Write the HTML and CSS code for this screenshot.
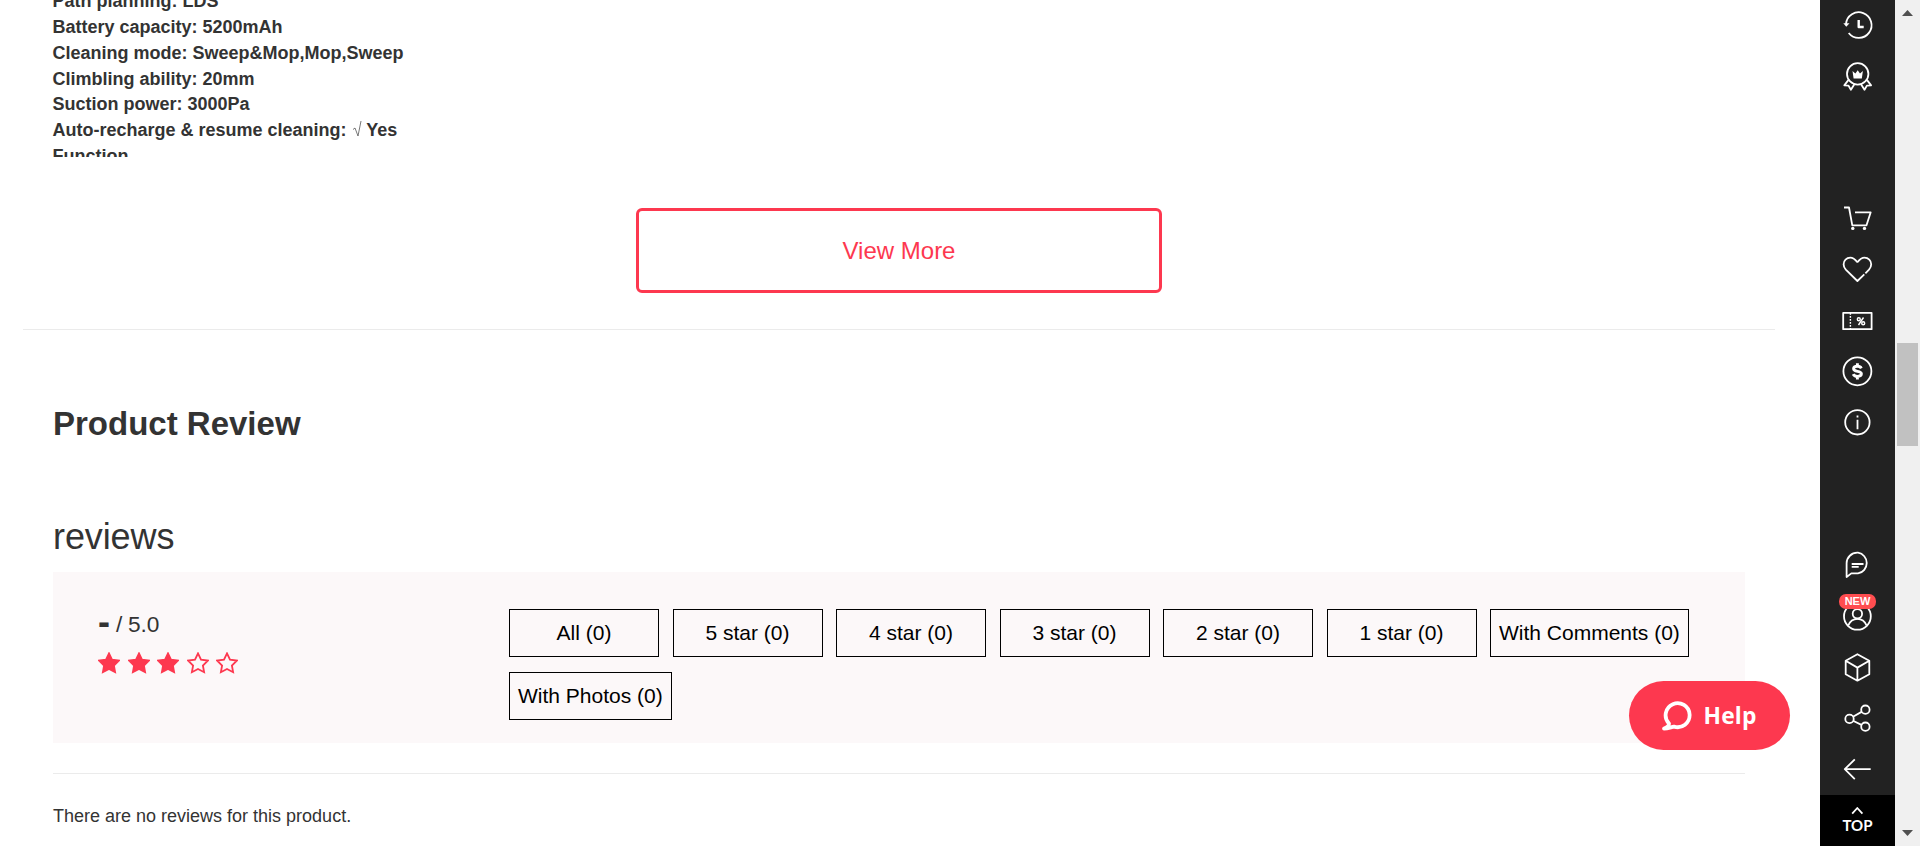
FILE: index.html
```html
<!DOCTYPE html>
<html lang="en">
<head>
<meta charset="utf-8">
<title>Product Review</title>
<link rel="stylesheet" href="styles.css">
</head>
<body>
<div class="page">
  <main class="main">
    <section class="details">
      <div class="specs">
        <p>Path planning: LDS</p>
        <p>Battery capacity: 5200mAh</p>
        <p>Cleaning mode: Sweep&amp;Mop,Mop,Sweep</p>
        <p>Climbling ability: 20mm</p>
        <p>Suction power: 3000Pa</p>
        <p>Auto-recharge &amp; resume cleaning: <svg class="root" viewBox="0 0 10 18"><path d="M1 9.500l2-1.500 3 8L9 1"/></svg> Yes</p>
        <p>Function</p>
      </div>
      <button class="view-more">View More</button>
    </section>
    <section class="review">
      <h2 class="title">Product Review</h2>
      <h3 class="subtitle">reviews</h3>
      <div class="panel">
        <div class="score">
          <div class="score-value"><b class="score-dash">-</b> / 5.0</div>
          <div class="stars">
            <svg class="star full" viewBox="0 0 22 22"><path d="M11 1.400l3 6.200 6.800 1-4.900 4.900 1.200 6.700-6.100-3.200-6.100 3.200 1.200-6.700-4.900-4.900 6.800-1z"/></svg>
            <svg class="star full" viewBox="0 0 22 22"><path d="M11 1.400l3 6.200 6.800 1-4.900 4.900 1.200 6.700-6.100-3.200-6.100 3.200 1.200-6.700-4.900-4.900 6.800-1z"/></svg>
            <svg class="star full" viewBox="0 0 22 22"><path d="M11 1.400l3 6.200 6.800 1-4.900 4.900 1.200 6.700-6.100-3.200-6.100 3.200 1.200-6.700-4.900-4.900 6.800-1z"/></svg>
            <svg class="star" viewBox="0 0 22 22"><path d="M11 1.400l3 6.200 6.800 1-4.900 4.900 1.200 6.700-6.100-3.200-6.100 3.200 1.200-6.700-4.900-4.900 6.800-1z"/></svg>
            <svg class="star" viewBox="0 0 22 22"><path d="M11 1.400l3 6.200 6.800 1-4.900 4.900 1.200 6.700-6.100-3.200-6.100 3.200 1.200-6.700-4.900-4.900 6.800-1z"/></svg>
          </div>
        </div>
        <div class="filters">
          <button class="filter">All (0)</button>
          <button class="filter">5 star (0)</button>
          <button class="filter">4 star (0)</button>
          <button class="filter">3 star (0)</button>
          <button class="filter">2 star (0)</button>
          <button class="filter">1 star (0)</button>
          <button class="filter">With Comments (0)</button>
          <button class="filter">With Photos (0)</button>
        </div>
      </div>
      <p class="empty">There are no reviews for this product.</p>
    </section>
  </main>

  <nav class="toolbar">
    <div class="group">
      <a class="tool"><svg class="icon" viewBox="0 0 75 51"><path d="M26 24A12.800 12.800 0 1 1 28.700 33"/><path class="solid" d="M23.300 23.300h6.200L26.300 26.800z"/><path class="thick" d="M38.700 20v7h5"/></svg></a>
      <a class="tool"><svg class="icon" viewBox="0 0 75 51"><circle cx="37.700" cy="22.900" r="10.700"/><path d="M28.300 29.100l-4 5.300 4.200.2 2.400 4.200 3.800-6M47.100 29.100l4 5.300-4.200.2-2.400 4.200-3.800-6"/><path class="solid" d="M32.500 20.100l2.900 2.500 2.300-3.300 2.300 3.300 2.900-2.500-1.100 7.500h-8.200z"/></svg></a>
    </div>
    <div class="group middle">
      <a class="tool"><svg class="icon" viewBox="0 0 75 51"><path d="M24 14.500h5l3.300 17.800h14.200l4.200-13H35"/><circle class="solid" cx="32.800" cy="35.400" r="1.700"/><circle class="solid" cx="44.500" cy="35.400" r="1.700"/></svg></a>
      <a class="tool"><svg class="icon" viewBox="0 0 75 51"><path d="M37.400 18.300C34.500 14.600 32.500 13.700 30.300 13.700 26.500 13.700 23.600 16.500 23.600 20.300c0 2 .6 3.700 2.200 5.400L37.400 37l6.900-6.700M45.400 29.300l3.600-3.600c1.600-1.700 2.200-3.400 2.200-5.400 0-3.800-2.900-6.600-6.700-6.600-2.200 0-4.200.9-7.100 4.600"/></svg></a>
      <a class="tool"><svg class="icon" viewBox="0 0 75 51"><path d="M23.200 17.800h28.400v16.400H23.200z"/><path class="dash" d="M30.400 18v16"/><g class="thin"><circle cx="38.800" cy="24.200" r="1.500"/><circle cx="43.200" cy="28.200" r="1.500"/><path d="M43.500 22.500l-5 7.500"/></g></svg></a>
      <a class="tool"><svg class="icon" viewBox="0 0 75 51"><circle cx="37.400" cy="25.300" r="14"/><path class="bold" d="M41.300 22.300c-.7-1.600-1.900-2-3.900-2-2.400 0-3.800 1-3.800 2.500 0 3.800 7.800 1.300 7.800 5 0 1.700-1.500 2.600-4 2.600-2.100 0-3.500-.6-4.200-2.200M37.400 17.200v3M37.400 30v3.400"/></svg></a>
      <a class="tool"><svg class="icon" viewBox="0 0 75 51"><circle cx="37.400" cy="25.300" r="12.200"/><path d="M37.500 22.700v9.600M37.500 18.500v2"/></svg></a>
    </div>
    <div class="group">
      <a class="tool"><svg class="icon" viewBox="0 0 75 51"><path d="M26.600 37V23.200A10.700 10.700 0 0 1 37.300 12.700h.7a10.500 10.500 0 0 1 0 20.700h-6.700z"/><path d="M31.700 24h11.800M31.700 26.900h7"/></svg></a>
      <a class="tool"><svg class="icon" viewBox="0 0 75 51"><circle cx="37.400" cy="25.300" r="13.400"/><circle cx="37.400" cy="22.800" r="4.700"/><path d="M28.200 34.500C30 30.200 33 27.900 37.400 27.900s7.400 2.300 9.200 6.600"/></svg><span class="badge">NEW</span></a>
      <a class="tool"><svg class="icon" viewBox="0 0 75 51"><path d="M37.400 12.200l11.900 6.500v13.500l-11.900 6.500-11.700-6.500V18.700zM25.700 18.700l11.700 6.900 11.900-6.900M37.400 25.600v13"/></svg></a>
      <a class="tool"><svg class="icon" viewBox="0 0 75 51"><circle cx="29.500" cy="25.900" r="4.200"/><circle cx="45.400" cy="16.700" r="4.200"/><circle cx="45.400" cy="33.700" r="4.200"/><path d="M33 23.800l9-5.200M33 27.800l9 4.300"/></svg></a>
      <a class="tool"><svg class="icon" viewBox="0 0 75 51"><path d="M50.700 25.200H24.600M34.800 15.400l-10 9.800 10 10"/></svg></a>
      <a class="tool top"><svg class="icon" viewBox="0 0 75 51"><path d="M32.200 18.700l5.100-5.700 5.100 5.700"/></svg><span class="top-label">TOP</span></a>
    </div>
  </nav>

  <div class="scrollbar">
    <svg class="arrow" viewBox="0 0 25 17"><path d="M7 16L12.500 10l5.500 6z"/></svg>
    <div class="thumb"></div>
    <svg class="arrow" viewBox="0 0 25 17"><path d="M7 1l5.500 6L18 1z"/></svg>
  </div>

  <button class="help"><svg class="help-icon" viewBox="0 0 30 32"><path d="M7 23.500A12 12 0 1 1 12 26.600C8 27.500 5.500 28.500 2 28.500 5 27.500 7 26 7 23.500z"/></svg>Help</button>
</div>
</body>
</html>
```

FILE: styles.css
```css
* { box-sizing: border-box; }
body {
  margin: 0;
  background: #fff;
  color: #333;
  font: 18px/1.42857 "Liberation Sans", Arial, sans-serif;
}
p, h2, h3 { margin: 0; }
button { font-family: inherit; }

.page { display: flex; height: 846px; overflow: hidden; position: relative; }
.main { width: 1752px; margin: 0 45px 0 23px; }

.details {
  display: flex;
  flex-direction: column;
  align-items: center;
  height: 330px;
  border-bottom: 1px solid #ebebeb;
}
.specs {
  display: flex;
  flex-direction: column;
  justify-content: flex-end;
  width: 100%;
  height: 157px;
  padding-left: 29.500px;
  overflow: hidden;
  font-weight: 700;
}
.specs p { flex: none; }
.specs p:last-child { height: 13.400px; }
.root {
  width: 10px;
  height: 18px;
  fill: none;
  stroke: #555;
  stroke-width: .8;
  vertical-align: -2px;
}
.view-more {
  width: 526px;
  height: 85px;
  margin-top: 51px;
  background: #fff;
  border: 3px solid #fd384f;
  border-radius: 6px;
  color: #fd384f;
  font-size: 24px;
}

.review { padding: 0 30px; }
.title { padding-top: 70px; font-size: 33px; line-height: 48px; }
.subtitle { padding-top: 63px; font-size: 36px; line-height: 52px; font-weight: 400; letter-spacing: -.1px; }
.panel {
  display: flex;
  height: 171px;
  margin-top: 9px;
  padding: 37px 45px 0;
  background: #fcf8f9;
}
.score { width: 411px; }
.score-value { height: 38px; margin-top: -5px; font-size: 22.700px; line-height: 31px; letter-spacing: -.2px; }
.score-dash { position: relative; top: 2px; font-size: 36px; line-height: 31px; }
.stars { display: flex; gap: 7.500px; margin-top: 9.500px; }
.star {
  width: 22px;
  height: 22px;
  fill: none;
  stroke: #fd384f;
  stroke-width: 1.800;
}
.full { fill: #fd384f; }
.filters { display: flex; flex-wrap: wrap; align-content: flex-start; gap: 15px 13.500px; flex: 1; }
.filter {
  min-width: 150px;
  height: 48px;
  padding: 0 8px;
  background: transparent;
  border: 1px solid #000;
  color: #000;
  font-size: 21px;
}
.empty { margin-top: 30px; padding-top: 30px; border-top: 1px solid #ebebeb; }

.toolbar {
  display: flex;
  flex-direction: column;
  justify-content: space-between;
  width: 75px;
  background: #222;
}
.middle { margin-bottom: 1px; }
.tool { display: block; position: relative; height: 51px; }
.icon {
  display: block;
  width: 75px;
  height: 51px;
  fill: none;
  stroke: #fff;
  stroke-width: 1.800;
  stroke-linejoin: round;
}
.solid { fill: #fff; stroke: none; }
.thick { stroke-width: 2.400; }
.bold { stroke-width: 2.900; }
.thin { stroke-width: 1.400; }
.dash { stroke-width: 1.400; stroke-dasharray: 1.800 1.200; }
.badge {
  position: absolute;
  left: 19px;
  top: 3px;
  width: 37px;
  height: 15px;
  border-radius: 7px;
  background: #ff4d50;
  color: #fff;
  font-size: 11px;
  font-weight: 700;
  line-height: 15px;
  text-align: center;
}
.top { background: #000; }
.top-label {
  position: absolute;
  left: 0;
  top: 20px;
  width: 75px;
  color: #fff;
  font: 700 15px/20px Lato, sans-serif;
  text-align: center;
}

.scrollbar { display: flex; flex-direction: column; width: 25px; background: #f0f0f0; }
.arrow { width: 25px; height: 17px; fill: #505050; }
.thumb { width: 21px; height: 103px; margin: 326px 2px 377px; background: #c1c1c1; }
.scrollbar .arrow:last-child { margin-top: 6px; }

.help {
  position: absolute;
  left: 1629px;
  top: 681px;
  display: flex;
  align-items: center;
  gap: 11.500px;
  width: 161px;
  height: 69px;
  padding: 0 0 0 33px;
  border: 0;
  border-radius: 35px;
  background: #fd384f;
  color: #fff;
  font: 700 22.800px "Open Sans", sans-serif;
  letter-spacing: .2px;
}
.help-icon {
  width: 30px;
  height: 32px;
  fill: none;
  stroke: #fff;
  stroke-width: 3.800;
  stroke-linejoin: round;
}
```
